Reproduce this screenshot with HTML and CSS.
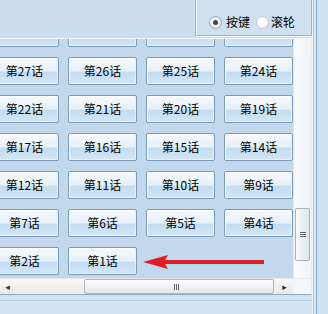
FILE: index.html
```html
<!DOCTYPE html>
<html>
<head>
    <title>选集</title>
    <link rel="stylesheet" href="styles.css">
</head>
<body>
    <div class="window">
        <div class="client">
            <div class="toolbar">
                <div class="mode-box">
                    <label class="radio checked"><span class="circle"></span>按键</label>
                    <label class="radio second"><span class="circle"></span>滚轮</label>
                </div>
            </div>

            <div class="panel">
                <div class="view-row">
                    <div class="view">
                        <div class="grid">
                            <!-- top row is scrolled out of sight, only its bottom edge shows -->
                            <button></button>
                            <button></button>
                            <button></button>
                            <button></button>
                            <button>第27话</button>
                            <button>第26话</button>
                            <button>第25话</button>
                            <button>第24话</button>
                            <button>第22话</button>
                            <button>第21话</button>
                            <button>第20话</button>
                            <button>第19话</button>
                            <button>第17话</button>
                            <button>第16话</button>
                            <button>第15话</button>
                            <button>第14话</button>
                            <button>第12话</button>
                            <button>第11话</button>
                            <button>第10话</button>
                            <button>第9话</button>
                            <button>第7话</button>
                            <button>第6话</button>
                            <button>第5话</button>
                            <button>第4话</button>
                            <button>第2话</button>
                            <button>第1话</button>
                        </div>
                        <!-- red pointer drawn over the list -->
                        <svg class="arrow" width="130" height="20" viewBox="0 0 130 20">
                            <line x1="22" y1="11" x2="124" y2="11" stroke="#9fe0e8" stroke-width="3"/>
                            <line x1="20" y1="9" x2="124" y2="9" stroke="#e41b25" stroke-width="4"/>
                            <polygon points="3,9 28,2 24,9 28,16" fill="#e41b25"/>
                        </svg>
                    </div>
                    <div class="vscroll">
                        <div class="vbtn"></div>
                        <div class="vtrack"></div>
                        <div class="vthumb"><span class="vgrip"></span></div>
                        <div class="vbtn"></div>
                    </div>
                </div>
                <div class="hscroll">
                    <div class="hbtn">&#9666;</div>
                    <div class="htrack"></div>
                    <div class="hthumb"><span class="hgrip"></span></div>
                    <div class="hbtn right">&#9656;</div>
                    <div class="corner"></div>
                </div>
            </div>

            <div class="status"></div>
        </div>
        <div class="frame"></div>
    </div>
</body>
</html>
```

FILE: styles.css
```css
body {
    margin: 0;
    background: #cbdeee;
    font-family: "Noto Sans CJK SC", "DejaVu Sans", sans-serif;
    font-size: 12px;
    color: #000;
}

.window {
    display: flex;
    width: 328px;
    height: 314px;
    overflow: hidden;
}

.client {
    width: 312px;
    display: flex;
    flex-direction: column;
}

.frame {
    flex: 1;
    background: linear-gradient(to right, #f4f9fd 0 1px, #a8c5de 1px 2px, #d6e8f5 2px 4px, #88aac8 4px 5px, #cfe2f0 5px);
}

/* top area with the radio group */
.toolbar {
    height: 38px;
    display: flex;
    justify-content: flex-end;
    align-items: flex-end;
}

.mode-box {
    width: 117px;
    height: 38px;
    margin-top: -3px;
    margin-bottom: 2px;
    border: 1px solid #9cb4c9;
    box-shadow: inset 1px 1px 0 #f2f8fc, 1px 1px 0 #f2f8fc;
    background: #cfe1ef;
    display: flex;
    align-items: center;
    padding: 10px 0 0 13px;
    box-sizing: border-box;
}

.radio {
    display: flex;
    align-items: center;
    gap: 4px;
    line-height: 14px;
}

.radio.second {
    margin-left: 6px;
    gap: 2px;
}

.circle {
    width: 11px;
    height: 11px;
    border: 1px solid #9aaabb;
    border-radius: 50%;
    background: radial-gradient(circle at 40% 40%, #ffffff, #d7dde3);
    position: relative;
}

.radio.second .circle {
    border-color: #c4ccd4;
    background: radial-gradient(circle at 40% 40%, #ffffff, #eef1f4);
}

.radio.checked .circle::after {
    content: "";
    position: absolute;
    left: 3px;
    top: 3px;
    width: 5px;
    height: 5px;
    border-radius: 50%;
    background: #3c4650;
}

/* list panel */
.panel {
    border-top: 1px solid #eef6fc;
    border-right: 1px solid #e6eef4;
    border-bottom: 1px solid #8eabc4;
}

.view-row {
    display: flex;
    height: 239px;
}

.view {
    width: 294px;
    overflow: hidden;
    position: relative;
    background: #c2d9ed;
}

.grid {
    display: grid;
    grid-template-columns: repeat(4, 69px);
    grid-auto-rows: 28px;
    column-gap: 9px;
    row-gap: 10px;
    margin: -20px 0 0 -10px;
}

.grid button {
    font-family: "Noto Sans CJK SC", "DejaVu Sans", sans-serif;
    font-size: 12px;
    color: #000;
    border: 1px solid #7c9bb8;
    border-radius: 2px;
    box-shadow: inset 1px 1px 0 #ffffff, inset -1px -1px 0 #e8f2fa;
    background: linear-gradient(#f6fafd 0%, #e6f0f8 50%, #c4dcf1 55%, #d3e6f6 100%);
    padding: 0;
    line-height: 26px;
}

.arrow {
    position: absolute;
    left: 140px;
    top: 214px;
}

/* vertical scrollbar */
.vscroll {
    width: 17px;
    display: flex;
    flex-direction: column;
    background: #f1f5f8;
    border-left: 1px solid #dfe8ef;
}

.vbtn {
    height: 17px;
    background: linear-gradient(to right, #fbfcfd, #eef3f6);
}

.vtrack {
    flex: 1;
    background: linear-gradient(to right, #f7f9fb, #eef2f5);
}

.vthumb {
    height: 51px;
    margin: 0 1px;
    border: 1px solid #a9b4bd;
    border-radius: 2px;
    background: linear-gradient(to right, #fafbfc, #dfe5ea);
    display: flex;
    align-items: center;
    justify-content: center;
}

.vgrip {
    width: 6px;
    height: 5px;
    background: repeating-linear-gradient(#5b6670 0 1px, transparent 1px 2px);
}

/* horizontal scrollbar */
.hscroll {
    display: flex;
    height: 15px;
    background: #f3f0ef;
    border-top: 1px solid #e3e9ee;
}

.hbtn {
    width: 15px;
    font-size: 9px;
    line-height: 15px;
    text-align: center;
    color: #2a2f33;
    background: linear-gradient(#fbf8f8, #ebe6e6);
}

.hbtn.right {
    width: 17px;
}

.htrack {
    width: 69px;
    background: linear-gradient(#fbf6f7, #efe9ea);
}

.hthumb {
    width: 190px;
    margin-right: 2px;
    border: 1px solid #b2b7bb;
    border-radius: 2px;
    background: linear-gradient(#fdfdfd, #e2e6e9);
    box-sizing: border-box;
    display: flex;
    align-items: center;
    padding-left: 89px;
}

.hgrip {
    width: 6px;
    height: 6px;
    background: repeating-linear-gradient(to right, #5b6670 0 1px, transparent 1px 2px);
}

.corner {
    flex: 1;
    background: #f4f7f9;
}

.status {
    flex: 1;
    background: linear-gradient(#cfe2f0 0 5px, #b4cfe4 5px 6px, #d2e4f1 6px);
}
```
